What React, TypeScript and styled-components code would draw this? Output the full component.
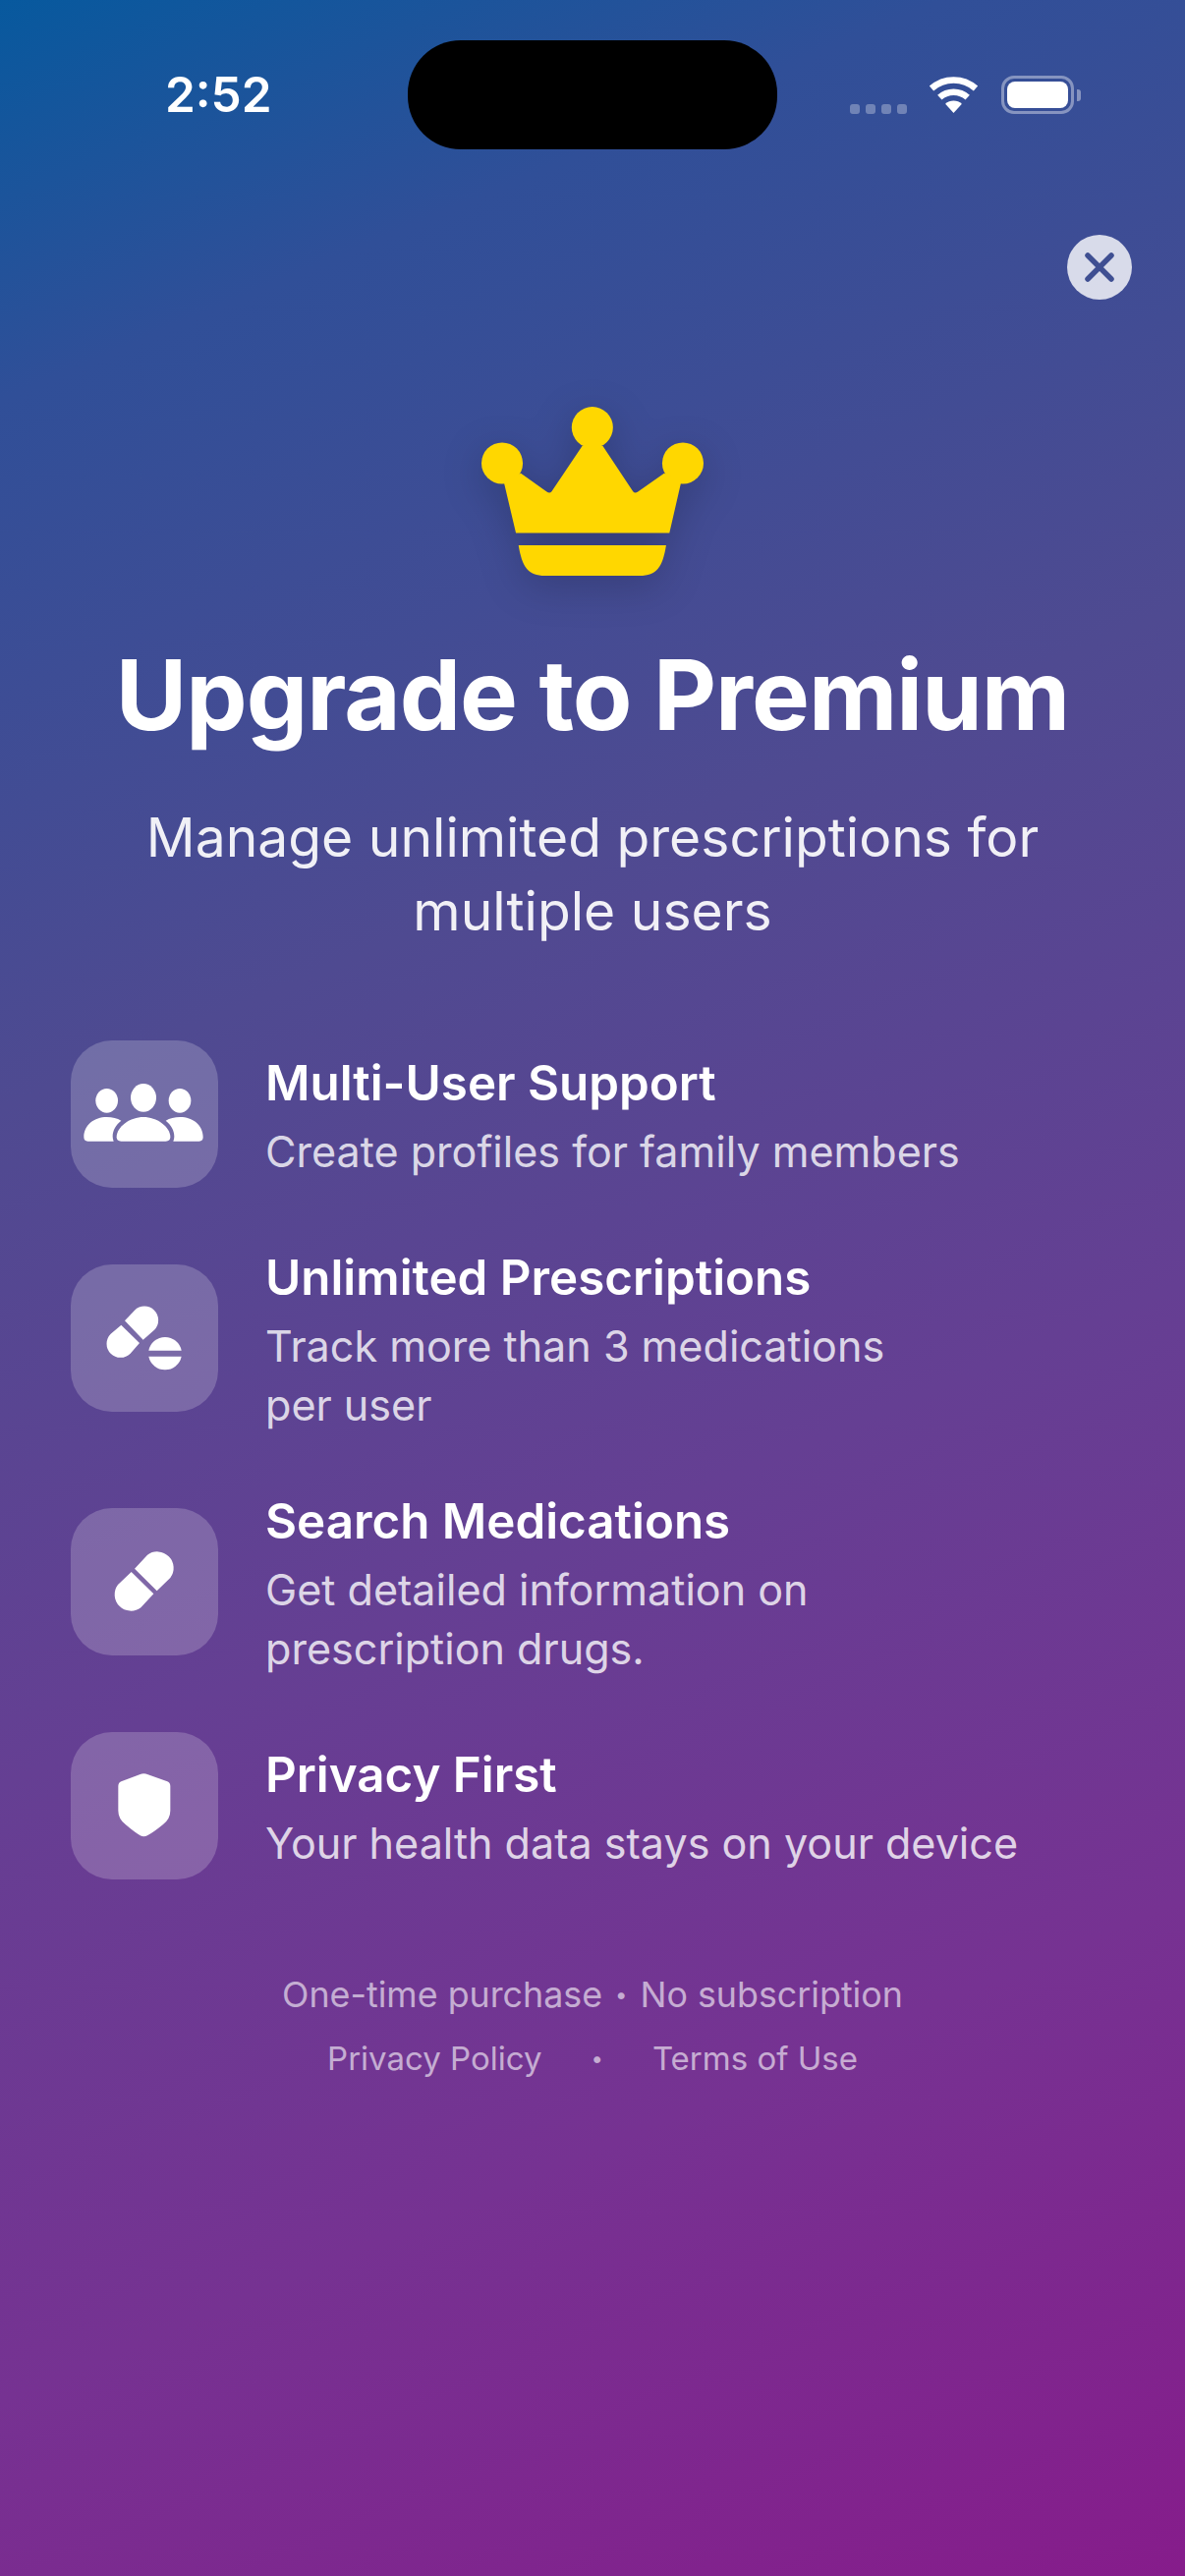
import React from "react";
import styled, { createGlobalStyle } from "styled-components";

const Global = createGlobalStyle`
  html, body { margin: 0; padding: 0; }
  body { font-family: "Inter", "Noto Sans", sans-serif; }
`;

const Screen = styled.div`
  width: 1206px;
  height: 2622px;
  overflow: hidden;
  display: flex;
  flex-direction: column;
  color: #fff;
  background: linear-gradient(157deg, #07599e 0%, #304f98 13%, #4f4a91 36%, #653f93 58%, #763292 78%, #861c8b 100%);
`;

const StatusBar = styled.div`
  display: flex;
  align-items: center;
  padding: 41px 0 0 168px;
  height: 111px;
`;

const Time = styled.div`
  width: 247px;
  font-size: 49.5px;
  font-weight: 600;
  line-height: 113px;
`;

const Island = styled.div`
  width: 376px;
  height: 111px;
  border-radius: 54px;
  background: #000;
`;

const StatusIcons = styled.div`
  display: flex;
  align-items: center;
  margin-left: 74px;
  height: 40px;
`;

const Dots = styled.div`
  display: flex;
  gap: 6px;
  align-self: flex-end;
  margin-bottom: 1px;
`;

const Dot = styled.span`
  width: 10px;
  height: 10px;
  border-radius: 3px;
  background: rgba(255, 255, 255, 0.3);
`;

const Wifi = styled.svg`
  width: 51px;
  height: 37px;
  margin-left: 22px;
`;

const Battery = styled.div`
  box-sizing: border-box;
  width: 74px;
  height: 39px;
  margin-left: 23px;
  padding: 3px;
  border: 3px solid rgba(255, 255, 255, 0.4);
  border-radius: 13px;
  display: flex;
`;

const BatteryFill = styled.span`
  flex: 1;
  border-radius: 8px;
  background: #fff;
`;

const BatteryNub = styled.span`
  width: 4px;
  height: 12px;
  margin-left: 3px;
  border-radius: 0 3px 3px 0;
  background: rgba(255, 255, 255, 0.4);
`;

const CloseRow = styled.div`
  display: flex;
  justify-content: flex-end;
  padding: 87px 54px 0 0;
`;

const CloseButton = styled.div`
  width: 66px;
  height: 66px;
  border-radius: 50%;
  background: rgba(255, 255, 255, 0.8);
  display: flex;
  align-items: center;
  justify-content: center;
`;

const Crown = styled.svg`
  align-self: center;
  width: 226px;
  height: 172px;
  margin-top: 109px;
  overflow: visible;
  filter: drop-shadow(0 10px 20px rgba(0, 0, 0, 0.2));
`;

const Title = styled.h1`
  margin: 63px 0 0;
  text-align: center;
  font-size: 99px;
  font-weight: 700;
  line-height: 116px;
  letter-spacing: -1px;
`;

const Subtitle = styled.p`
  margin: 50px 0 0;
  padding: 0 100px;
  text-align: center;
  font-size: 55.2px;
  font-weight: 400;
  line-height: 75px;
  opacity: 0.92;
`;

const Features = styled.div`
  display: flex;
  flex-direction: column;
  gap: 58px;
  margin-top: 94px;
  padding: 0 72px;
`;

const Row = styled.div`
  display: flex;
  align-items: center;
  gap: 48px;
`;

const Tile = styled.div`
  flex: none;
  width: 150px;
  height: 150px;
  border-radius: 42px;
  background: rgba(255, 255, 255, 0.2);
`;

const TileIcon = styled.svg`
  display: block;
  width: 150px;
  height: 150px;
`;

const RowText = styled.div`
  display: flex;
  flex-direction: column;
  gap: 10px;
  padding-top: 3px;
  margin-bottom: -3px;
`;

const RowTitle = styled.div`
  font-size: 49.3px;
  font-weight: 600;
  line-height: 60px;
`;

const RowSub = styled.div`
  font-size: 43.1px;
  font-weight: 400;
  line-height: 60px;
  color: rgba(255, 255, 255, 0.8);
`;

const Footer = styled.div`
  display: flex;
  flex-direction: column;
  align-items: center;
  margin-top: 85px;
  line-height: 65px;
  color: rgba(255, 255, 255, 0.6);
`;

const FooterLine = styled.div<{ $size: number }>`
  display: flex;
  align-items: center;
  white-space: pre;
  font-size: ${(p) => p.$size}px;
`;

const Bullet = styled.span<{ $gap: number }>`
  font-size: 22px;
  margin: 0 ${(p) => p.$gap}px;
`;

export default function App() {
  return (
    <Screen>
      <Global />
      <StatusBar>
        <Time>2:52</Time>
        <Island />
        <StatusIcons>
          <Dots>
            <Dot />
            <Dot />
            <Dot />
            <Dot />
          </Dots>
          <Wifi viewBox="0 0 51 37">
            <path d="M3 12A33.7 33.7 0 0 1 48 12" fill="none" stroke="#fff" strokeWidth="6.5" />
            <path d="M11.3 21.2A21.3 21.3 0 0 1 39.7 21.2" fill="none" stroke="#fff" strokeWidth="6.5" />
            <path d="M25.5 37L17.1 27.7A12.5 12.5 0 0 1 33.9 27.7Z" fill="#fff" />
          </Wifi>
          <Battery>
            <BatteryFill />
          </Battery>
          <BatteryNub />
        </StatusIcons>
      </StatusBar>

      <CloseRow>
        <CloseButton>
          <svg width="30" height="30" viewBox="0 0 30 30">
            <path d="M3 3L27 27M27 3L3 27" stroke="#3f4f92" strokeWidth="5.5" strokeLinecap="round" fill="none" />
          </svg>
        </CloseButton>
      </CloseRow>

      <Crown viewBox="150 102 677 515">
        <g fill="#ffd700">
          <circle cx="488" cy="165" r="63" />
          <circle cx="213" cy="274" r="63" />
          <circle cx="764" cy="274" r="63" />
          <path d="M218 330L255 487H723L759 330L707 305L627 361Q618 368 612 360L520 222H457L364 360Q358 368 349 361L270 305Z" />
          <path d="M263 524H713C702 590 685 617 632 617H344C291 617 274 590 263 524Z" />
        </g>
      </Crown>

      <Title>Upgrade to Premium</Title>
      <Subtitle>Manage unlimited prescriptions for multiple users</Subtitle>

      <Features>
        <Row>
          <Tile>
            <TileIcon viewBox="68 57 450 450" fill="#fff">
              <ellipse cx="290" cy="232" rx="39" ry="43" />
              <ellipse cx="178" cy="241" rx="34" ry="37" />
              <ellipse cx="401" cy="241" rx="34" ry="37" />
              <path d="M208 352C208 320 250 291 290 291C330 291 372 320 372 352Q372 365 358 365H222Q208 365 208 352Z" />
              <path d="M108 352C108 315 140 291 178 291C195 291 210 295 222 302C205 315 196 333 196 350Q196 358 199 365H120Q108 365 108 352Z" />
              <path d="M472 352C472 315 440 291 402 291C385 291 370 295 358 302C375 315 384 333 384 350Q384 358 381 365H460Q472 365 472 352Z" />
            </TileIcon>
          </Tile>
          <RowText>
            <RowTitle>Multi-User Support</RowTitle>
            <RowSub>Create profiles for family members</RowSub>
          </RowText>
        </Row>
        <Row>
          <Tile>
            <TileIcon viewBox="68 745 450 450" fill="#fff">
              <path d="M233 917L263 885A42 42 0 0 1 323 945L289 975Z" />
              <path d="M222 930L190 957A42 42 0 0 0 250 1017L278 985Z" />
              <path d="M306 1008A51 51 0 0 1 406 1008Z" />
              <path d="M306 1026A51 51 0 0 0 406 1026Z" />
            </TileIcon>
          </Tile>
          <RowText>
            <RowTitle>Unlimited Prescriptions</RowTitle>
            <RowSub>
              Track more than 3 medications
              <br />
              per user
            </RowSub>
          </RowText>
        </Row>
        <Row>
          <Tile>
            <TileIcon viewBox="68 105 450 450" fill="#fff">
              <path d="M263 290L302 248A50 50 0 0 1 372 318L331 358Z" />
              <path d="M253 300L212 339A50 50 0 0 0 282 409L321 367Z" />
            </TileIcon>
          </Tile>
          <RowText>
            <RowTitle>Search Medications</RowTitle>
            <RowSub>
              Get detailed information on
              <br />
              prescription drugs.
            </RowSub>
          </RowText>
        </Row>
        <Row>
          <Tile>
            <TileIcon viewBox="68 790 450 450" fill="#fff">
              <path d="M291 917Q285 917 278 920L222 941Q213 945 213 955V1030Q213 1055 235 1072Q262 1095 280 1106Q291 1112 302 1106Q322 1095 350 1072Q372 1055 372 1030V955Q372 945 363 941L304 920Q297 917 291 917Z" />
            </TileIcon>
          </Tile>
          <RowText>
            <RowTitle>Privacy First</RowTitle>
            <RowSub>Your health data stays on your device</RowSub>
          </RowText>
        </Row>
      </Features>

      <Footer>
        <FooterLine $size={35.8}>
          <span>One-time purchase</span>
          <Bullet $gap={13}>•</Bullet>
          <span>No subscription</span>
        </FooterLine>
        <FooterLine $size={33}>
          <span>Privacy Policy</span>
          <Bullet $gap={50}>•</Bullet>
          <span>Terms of Use</span>
        </FooterLine>
      </Footer>
    </Screen>
  );
}
